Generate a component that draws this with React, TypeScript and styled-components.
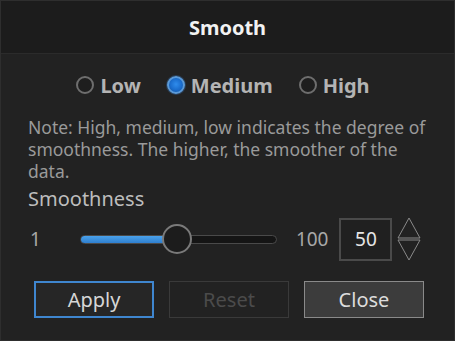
import { useState } from "react";
import styled, { createGlobalStyle } from "styled-components";

const GlobalStyle = createGlobalStyle`
  html, body {
    margin: 0;
    padding: 0;
    background: #1e1e1e;
  }
  * {
    box-sizing: border-box;
  }
`;

const Dialog = styled.div`
  width: 455px;
  height: 341px;
  display: flex;
  flex-direction: column;
  background: #222222;
  border: 1px solid #2e2e2e;
  font-family: "Noto Sans", "Open Sans", sans-serif;
  overflow: hidden;
`;

const Header = styled.div`
  height: 53px;
  flex-shrink: 0;
  display: flex;
  align-items: center;
  justify-content: center;
  background: #1c1c1c;
  border-bottom: 1px solid #2b2b2b;
  color: #f2f2f2;
  font-size: 20px;
  font-weight: 700;
`;

const Body = styled.div`
  flex: 1;
  display: flex;
  flex-direction: column;
  padding: 0 20px 0 26px;
`;

const RadioRow = styled.div`
  height: 62px;
  display: flex;
  align-items: center;
  justify-content: center;
  gap: 26px;
  padding-right: 15px;
`;

const RadioLabel = styled.label`
  display: flex;
  align-items: center;
  gap: 6px;
  color: #b4b4b4;
  font-size: 20px;
  font-weight: 700;
  cursor: pointer;
`;

const RadioDot = styled.span<{ $checked: boolean }>`
  width: 18px;
  height: 18px;
  border-radius: 50%;
  border: 2px solid ${({ $checked }) => ($checked ? "#5b9ad8" : "#6e6e6e")};
  background: ${({ $checked }) =>
    $checked
      ? "radial-gradient(circle at 50% 45%, #2f8cec 0%, #1a6ccc 55%, #154f95 100%)"
      : "#1e1e1e"};
  box-shadow: ${({ $checked }) =>
    $checked ? "0 0 0 1px rgba(60,120,190,0.35)" : "none"};
`;

const Note = styled.p`
  margin: 0 0 0 1px;
  color: #9a9a9a;
  font-size: 17.5px;
  line-height: 22px;
`;

const Label = styled.div`
  color: #bdbdbd;
  font-size: 20px;
  line-height: 24px;
  margin-top: 5px;
  margin-left: 1px;
`;

const SliderRow = styled.div`
  display: flex;
  align-items: center;
  height: 46px;
  margin-top: 5px;
  padding-left: 3px;
`;

const RangeText = styled.span`
  color: #a8a8a8;
  font-size: 19px;
`;

const Track = styled.div`
  position: relative;
  width: 197px;
  height: 9px;
  margin: 0 19px 0 39px;
  border-radius: 5px;
  border: 1px solid #4a4a4a;
  background: #151515;
`;

const Fill = styled.div`
  height: 100%;
  border-radius: 4px;
  background: linear-gradient(#4aa2ec, #2f7fce);
`;

const Thumb = styled.div`
  position: absolute;
  top: 50%;
  width: 30px;
  height: 30px;
  border-radius: 50%;
  transform: translate(-50%, -50%);
  background: #1c1c1c;
  border: 2px solid #7a7a7a;
`;

const ValueBox = styled.div`
  width: 53px;
  height: 43px;
  margin-left: 11px;
  display: flex;
  align-items: center;
  justify-content: center;
  border: 2px solid #4a4a4a;
  background: #202020;
  color: #e6e6e6;
  font-size: 19px;
`;

const Spinner = styled.svg`
  margin-left: 5px;
`;

const ButtonRow = styled.div`
  display: flex;
  gap: 15px;
  margin-top: 19px;
  padding-left: 7px;
`;

type ButtonKind = "primary" | "disabled" | "normal";

const Button = styled.button<{ $kind: ButtonKind }>`
  width: 120px;
  height: 37px;
  font-family: "Noto Sans", sans-serif;
  font-size: 20px;
  padding: 0;
  cursor: ${({ $kind }) => ($kind === "disabled" ? "default" : "pointer")};
  color: ${({ $kind }) =>
    $kind === "disabled" ? "#4b4b4b" : $kind === "primary" ? "#d6d6d6" : "#dcdcdc"};
  background: ${({ $kind }) =>
    $kind === "normal" ? "#3c3c3c" : $kind === "primary" ? "#262626" : "#222222"};
  border: ${({ $kind }) =>
    $kind === "primary"
      ? "2px solid #3f86cf"
      : $kind === "disabled"
      ? "1px solid #3a3a3a"
      : "1px solid #8a8a8a"};
`;

const levels = ["Low", "Medium", "High"];

export default function App() {
  const [level, setLevel] = useState("Medium");
  const value = 50;
  const pct = ((value - 1) / 99) * 100;

  return (
    <>
      <GlobalStyle />
      <Dialog>
        <Header>Smooth</Header>
        <Body>
          <RadioRow>
            {levels.map((l) => (
              <RadioLabel key={l} onClick={() => setLevel(l)}>
                <RadioDot $checked={level === l} />
                {l}
              </RadioLabel>
            ))}
          </RadioRow>
          <Note>
            Note: High, medium, low indicates the degree of smoothness. The
            higher, the smoother of the data.
          </Note>
          <Label>Smoothness</Label>
          <SliderRow>
            <RangeText>1</RangeText>
            <Track>
              <Fill style={{ width: `${pct}%` }} />
              <Thumb style={{ left: `${pct}%` }} />
            </Track>
            <RangeText>100</RangeText>
            <ValueBox>{value}</ValueBox>
            <Spinner width="24" height="44" viewBox="0 0 24 44">
              <path d="M12 1 L23 21 L1 21 Z" fill="none" stroke="#8a8a8a" strokeWidth="1" />
              <path d="M1 23 L23 23 L12 43 Z" fill="none" stroke="#8a8a8a" strokeWidth="1" />
            </Spinner>
          </SliderRow>
          <ButtonRow>
            <Button $kind="primary">Apply</Button>
            <Button $kind="disabled" disabled>
              Reset
            </Button>
            <Button $kind="normal">Close</Button>
          </ButtonRow>
        </Body>
      </Dialog>
    </>
  );
}
